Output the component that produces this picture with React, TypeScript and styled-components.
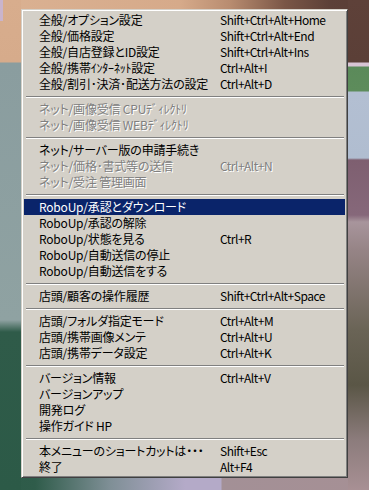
import React from 'react';
import styled, { createGlobalStyle, css } from 'styled-components';

const GlobalStyle = createGlobalStyle`
  html, body {
    margin: 0;
    padding: 0;
  }
  body {
    font-family: "Noto Sans CJK JP", "Liberation Sans", sans-serif;
  }
`;

// the desktop behind the popup: a few blurred window edges, drawn as gradients
const Desktop = styled.div`
  box-sizing: border-box;
  width: 369px;
  height: 490px;
  overflow: hidden;
  padding: 9px 0 0 21px;
  background:
    linear-gradient(#c9b4cc, #c9b4cc) 0 0 / 3px 21px no-repeat,
    linear-gradient(
        to bottom,
        #d8ad8d 0,
        #d6ab8b 62px,
        #8a9d9f 63px,
        #8fa2a2 320px,
        #2f5b49 332px,
        #2c5a47 100%
      )
      0 0 / 21px 100% no-repeat,
    linear-gradient(
        to bottom,
        #5e4139 0,
        #5b3f37 62px,
        #d8c4d4 63px,
        #d8c4d4 66px,
        #5b8a5a 67px,
        #5d8c5b 91px,
        #b3bfd2 92px,
        #b0bdd0 158px,
        #7e5f70 160px,
        #86687a 215px,
        #a8959c 222px,
        #968486 250px,
        #6a6456 330px,
        #5a5646 385px,
        #8c7c7c 440px,
        #a89094 100%
      )
      right 0 / 21px 100% no-repeat,
    linear-gradient(
        to right,
        #2d5b48 0,
        #2f5c4a 35px,
        #7f8f96 110px,
        #b4aac8 185px,
        #b4aac8 221px,
        #a39096 222px,
        #a69095 100%
      )
      0 bottom / 100% 12px no-repeat,
    linear-gradient(
        to right,
        #dab192 0,
        #d6aa8a 180px,
        #b88c70 230px,
        #7a5646 285px,
        #5c4038 330px,
        #5a3d35 100%
      )
      0 0 / 100% 9px no-repeat,
    #8fa2a2;
`;

const Menu = styled.div`
  box-sizing: border-box;
  width: 327px;
  padding: 2px;
  background: #d4d0c8;
  border-top: 1px solid #d4d0c8;
  border-left: 1px solid #d4d0c8;
  border-right: 1px solid #404040;
  border-bottom: 1px solid #404040;
  box-shadow: inset 1px 1px 0 #ffffff, inset -1px -1px 0 #808080;
  font-size: 12px;
  line-height: 16px;
  color: #000;
  font-feature-settings: "palt";
`;

const Row = styled.div<{ $disabled?: boolean; $active?: boolean }>`
  display: grid;
  grid-template-columns: 181px 1fr;
  height: 16px;
  padding-left: 15px;
  white-space: nowrap;
  ${(p) =>
    p.$disabled &&
    css`
      color: #808080;
      text-shadow: 1px 1px 0 #ffffff;
    `}
  ${(p) =>
    p.$active &&
    css`
      background: #0a246a;
      color: #ffffff;
    `}
`;

const Label = styled.span`
  overflow: visible;
  letter-spacing: -0.2px;
`;

const Shortcut = styled.span`
  letter-spacing: -0.5px;
`;

const Separator = styled.div`
  height: 0;
  margin: 4px 1px 3px 2px;
  border-top: 1px solid #808080;
  border-bottom: 1px solid #ffffff;
`;

type Entry =
  | { sep: true }
  | { label: string; keys?: string; disabled?: boolean; active?: boolean };

const entries: Entry[] = [
  { label: '全般/オプション設定', keys: 'Shift+Ctrl+Alt+Home' },
  { label: '全般/価格設定', keys: 'Shift+Ctrl+Alt+End' },
  { label: '全般/自店登録とID設定', keys: 'Shift+Ctrl+Alt+Ins' },
  { label: '全般/携帯ｲﾝﾀｰﾈｯﾄ設定', keys: 'Ctrl+Alt+I' },
  { label: '全般/割引･決済･配送方法の設定', keys: 'Ctrl+Alt+D' },
  { sep: true },
  { label: 'ネット/画像受信 CPUﾃﾞｨﾚｸﾄﾘ', disabled: true },
  { label: 'ネット/画像受信 WEBﾃﾞｨﾚｸﾄﾘ', disabled: true },
  { sep: true },
  { label: 'ネット/サーバー版の申請手続き' },
  { label: 'ネット/価格･書式等の送信', keys: 'Ctrl+Alt+N', disabled: true },
  { label: 'ネット/受注 管理画面', disabled: true },
  { sep: true },
  { label: 'RoboUp/承認とダウンロード', active: true },
  { label: 'RoboUp/承認の解除' },
  { label: 'RoboUp/状態を見る', keys: 'Ctrl+R' },
  { label: 'RoboUp/自動送信の停止' },
  { label: 'RoboUp/自動送信をする' },
  { sep: true },
  { label: '店頭/顧客の操作履歴', keys: 'Shift+Ctrl+Alt+Space' },
  { sep: true },
  { label: '店頭/フォルダ指定モード', keys: 'Ctrl+Alt+M' },
  { label: '店頭/携帯画像メンテ', keys: 'Ctrl+Alt+U' },
  { label: '店頭/携帯データ設定', keys: 'Ctrl+Alt+K' },
  { sep: true },
  { label: 'バージョン情報', keys: 'Ctrl+Alt+V' },
  { label: 'バージョンアップ' },
  { label: '開発ログ' },
  { label: '操作ガイド HP' },
  { sep: true },
  { label: '本メニューのショートカットは・・・', keys: 'Shift+Esc' },
  { label: '終了', keys: 'Alt+F4' },
];

export default function App() {
  return (
    <>
      <GlobalStyle />
      <Desktop>
        <Menu>
          {entries.map((e, i) =>
            'sep' in e ? (
              <Separator key={i} />
            ) : (
              <Row key={i} $disabled={e.disabled} $active={e.active}>
                <Label>{e.label}</Label>
                <Shortcut>{e.keys}</Shortcut>
              </Row>
            )
          )}
        </Menu>
      </Desktop>
    </>
  );
}
